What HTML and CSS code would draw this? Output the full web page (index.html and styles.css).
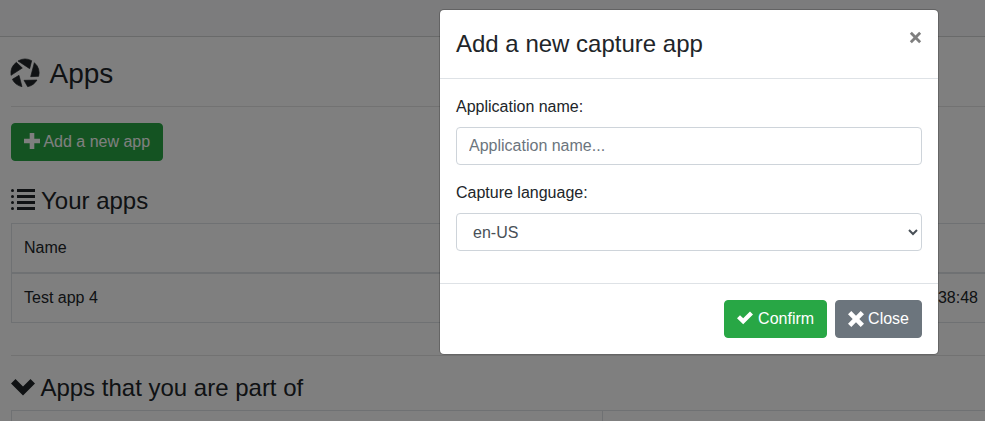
FILE: index.html
```html
<!DOCTYPE html>
<html lang="en">
<head>
<meta charset="utf-8">
<title>Apps</title>
<link rel="stylesheet" href="styles.css">
</head>
<body>
<div class="topbar"></div>
<main class="page">
  <h1 class="page-title"><svg class="icon" viewBox="0 0 84 84"><path d="M21 6A42 42 0 0 1 62 5L56 29zM70 11A42 42 0 0 1 83 52L59 53zM78 63A42 42 0 0 1 50 83L39 64zM33 83A42 42 0 0 1 4 61L24 49zM0 49A42 42 0 0 1 16 10L34 27z"/></svg><span>Apps</span></h1>
  <hr>
  <button class="btn btn-success btn-add"><svg class="icon" viewBox="0 0 16 16"><path d="M5.7 0v5.7H0v4.6h5.7V16h4.6v-5.7H16V5.7h-5.7V0z"/></svg><span>Add a new app</span></button>
  <h2 class="section-title your-apps"><svg class="icon" viewBox="0 0 8 8"><path d="M2 0h6v1h-6zM2 2h6v1h-6zM2 4h6v1h-6zM2 6h6v1h-6z"/><circle cx=".5" cy=".5" r=".5"/><circle cx=".5" cy="2.5" r=".5"/><circle cx=".5" cy="4.5" r=".5"/><circle cx=".5" cy="6.5" r=".5"/></svg><span>Your apps</span></h2>
  <div class="table">
    <div class="row head"><span>Name</span></div>
    <div class="row"><span>Test app 4</span><span>38:48</span></div>
  </div>
  <hr class="wide">
  <h2 class="section-title part-of"><svg class="icon" viewBox="0 0 8 8"><path d="M1.5 1l-1.5 1.5 4 4 4-4-1.5-1.5-2.5 2.5-2.5-2.5z"/></svg><span>Apps that you are part of</span></h2>
  <div class="columns"><div class="cell"></div><div class="cell"></div></div>
</main>
<div class="backdrop">
  <div class="modal" role="dialog">
    <div class="modal-header">
      <h3 class="modal-title">Add a new capture app</h3>
      <button class="dismiss" aria-label="Close"><svg class="icon" viewBox="0 0 12 12"><path d="M1.7 1.7L10.3 10.3M10.3 1.7L1.7 10.3"/></svg></button>
    </div>
    <div class="modal-body">
      <label for="name">Application name:</label>
      <input id="name" class="control" type="text" placeholder="Application name...">
      <label for="lang">Capture language:</label>
      <select id="lang" class="control"><option>en-US</option></select>
    </div>
    <div class="modal-footer">
      <button class="btn btn-success btn-confirm"><svg class="icon" viewBox="0 0 16 16"><path d="M0 8.2L3 5.2L6.2 8.3L13 1.5L16 4.5L6.2 14.2z"/></svg><span>Confirm</span></button>
      <button class="btn btn-secondary btn-close"><svg class="icon" viewBox="0 0 16 16"><path d="M3.3 0L8 4.7L12.7 0L16 3.3L11.3 8L16 12.7L12.7 16L8 11.3L3.3 16L0 12.7L4.7 8L0 3.3z"/></svg><span>Close</span></button>
    </div>
  </div>
</div>
</body>
</html>
```
FILE: styles.css
```css
* { box-sizing: border-box; }
body {
  margin: 0;
  height: 421px;
  overflow: hidden;
  background: #fff;
  color: #212529;
  font: 16px/24px "Liberation Sans", Arial, sans-serif;
}
h1, h2, h3 { margin: 0; font-weight: 400; }
.icon { display: block; flex: none; fill: currentColor; }
.topbar { height: 37px; background: #f8f9fa; border-bottom: 1px solid #d3d4d5; }
.page { padding: 19px 0 0 11px; }
.page-title { display: flex; align-items: center; height: 34px; gap: 10.5px; font-size: 28px; line-height: 34px; }
.page-title span { padding-top: 2px; }
.page-title .icon { width: 28px; height: 28px; stroke: currentColor; stroke-width: 2; stroke-linejoin: round; overflow: visible; }
hr { margin: 16px 0; border: 0; border-top: 1px solid #e5e5e5; }
hr.wide { margin: 32px 0 17px; }
.btn {
  display: flex;
  align-items: center;
  height: 38px;
  padding: 0 12px;
  border: 1px solid;
  border-radius: 4px;
  color: #fff;
  font: inherit;
  gap: 4px;
}
.btn .icon { width: 16px; height: 16px; }
.btn-success { background: #28a745; border-color: #28a745; }
.btn-secondary { background: #6c757d; border-color: #6c757d; }
.btn-add { gap: 3.4px; }
.btn-add .icon { margin-bottom: 3px; }
.btn-confirm { gap: 4.8px; }
.btn-confirm .icon { margin-bottom: 3px; }
.section-title { display: flex; align-items: center; height: 29px; gap: 6px; margin-bottom: 8px; font-size: 24px; line-height: 29px; }
.section-title .icon { width: 24px; height: 24px; }
.your-apps { margin-top: 25px; }
.part-of { gap: 5.4px; }
.table { border: 1px solid #dee2e6; border-right: 0; }
.row { display: flex; justify-content: space-between; padding: 12px 7px 12px 12px; }
.head { border-bottom: 2px solid #dee2e6; }
.columns { display: grid; grid-template-columns: 590px 1fr; height: 11px; border: 1px solid #dee2e6; border-width: 1px 0 0 1px; }
.cell + .cell { border-left: 1px solid #dee2e6; }
.backdrop { position: absolute; inset: 0; background: rgba(0, 0, 0, .5); }
.modal {
  width: 500px;
  margin: 9px 0 0 439px;
  background: #fff;
  background-clip: padding-box;
  border: 1px solid rgba(0, 0, 0, .2);
  border-radius: 5px;
}
.modal-header { display: flex; justify-content: space-between; padding: 16px; border-bottom: 1px solid #dee2e6; }
.modal-title { font-size: 24px; line-height: 36px; }
.dismiss { align-self: flex-start; margin: 5px .5px 0 0; padding: 0; border: 0; background: none; }
.dismiss .icon { width: 13px; height: 13px; stroke: #7f7f7f; stroke-width: 2.6; fill: none; }
.modal-body { padding: 16px; }
label { display: block; margin-bottom: 8px; }
.control {
  display: block;
  width: 100%;
  height: 38px;
  margin-bottom: 16px;
  padding: 6px 12px;
  border: 1px solid #ced4da;
  border-radius: 4px;
  background: #fff;
  color: #495057;
  font: inherit;
}
.control::placeholder { color: #6c757d; opacity: 1; }
.modal-footer { display: flex; justify-content: flex-end; gap: 8px; padding: 16px; border-top: 1px solid #dee2e6; }
```
